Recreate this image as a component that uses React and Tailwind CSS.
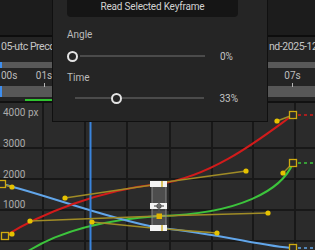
export default function App() {
  const vLines = [43, 85, 127, 170, 212, 253, 295];
  const hLines = [148, 179, 210, 241];
  const dots = [
    [277, 121], [283, 173], [246, 171], [268, 213], [217, 233],
    [65, 198], [30, 221], [12, 187], [12, 234], [92, 222],
  ];
  const handles = [
    [277, 121, 293, 115],
    [283, 173, 293, 163],
    [166, 182, 246, 171],
    [65, 198, 152, 185],
    [30, 221, 159, 216],
    [159, 216, 268, 213],
    [92, 222, 152, 228],
    [166, 229, 217, 233],
    [2, 184, 12, 187],
    [5, 236, 12, 234],
  ];
  return (
    <div className="relative w-[315px] h-[250px] overflow-hidden bg-[#1c1c1c] font-['Roboto',sans-serif] text-[10px]">
      <div className="h-[35px] bg-[#1c1c1c]" />
      <div className="h-[2px] bg-[#0d0d0d]" />
      <div className="bg-[#242424]">
        <div className="h-[25px] flex items-start text-[#c6c6c6] text-[10.5px] leading-[20px] tracking-[-0.45px]">
          <div className="w-[269px] shrink-0 pl-[1px] whitespace-nowrap overflow-hidden">05-utc Precomp 1</div>
          <div className="whitespace-nowrap overflow-hidden">nd-2025-12-05</div>
        </div>
        <div className="h-[6px] flex bg-[#595959]">
          <div className="w-[2px] bg-[#3d8ef0]" />
        </div>
        <div className="h-[18px] flex items-start text-[#bdbdbd] leading-[14px] pt-[1px]">
          <div className="w-[30px] pl-[1px] flex flex-col items-start">
            <span>00s</span>
          </div>
          <div className="w-[28px] flex flex-col items-center">
            <span>01s</span>
            <div className="w-[1px] h-[4px] bg-[#b5b5b5]" />
          </div>
          <div className="flex-1" />
          <div className="w-[27px] mr-[9px] flex flex-col items-center">
            <span>07s</span>
            <div className="w-[1px] h-[4px] bg-[#b5b5b5]" />
          </div>
        </div>
        <div className="h-[11px] flex bg-[#575757]">
          <div className="w-[2px] bg-[#3d8ef0]" />
        </div>
        <div className="h-[2px]" />
        <div className="h-[2px] flex">
          <div className="ml-[25px] w-[110px] bg-[#2fc42f]" />
        </div>
      </div>
      <div className="h-[2px] bg-[#111111]" />
      <svg width="315" height="147" viewBox="0 103 315 147" className="block bg-[#2b2b2b]">
        {vLines.map((x) => (
          <line key={"v" + x} x1={x} y1="103" x2={x} y2="250" stroke="#181818" strokeWidth="2" />
        ))}
        {hLines.map((y) => (
          <line key={"h" + y} x1="0" y1={y} x2="315" y2={y} stroke="#181818" strokeWidth="2" />
        ))}
        <g fill="#ababab" fontSize="10" fontFamily="Roboto, sans-serif">
          <text x="3" y="116">4000 px</text>
          <text x="3" y="147">3000</text>
          <text x="3" y="177.5">2000</text>
          <text x="3" y="208">1000</text>
        </g>
        <g fill="none" strokeWidth="2" strokeLinecap="round">
          <path d="M18 258 C50 234 100 220 159 216 C240 214 282 190 293 163" stroke="#3cc43c" />
          <path d="M2 184 C50 196 105 218 159 228 C217 233 265 247 293 248" stroke="#62a6ea" />
          <path d="M5 236 C40 214 100 190 159 184 C215 176 265 135 293 115" stroke="#d21b1b" />
        </g>
        <g strokeWidth="1.6" strokeDasharray="3 3">
          <line x1="298" y1="115" x2="315" y2="115" stroke="#d21b1b" />
          <line x1="298" y1="163" x2="315" y2="163" stroke="#3cc43c" />
          <line x1="298" y1="248" x2="315" y2="248" stroke="#62a6ea" />
        </g>
        <line x1="90.5" y1="103" x2="90.5" y2="250" stroke="#3a84dc" strokeWidth="2" />
        <g stroke="#a08c26" strokeWidth="1.5">
          {handles.map((h, i) => (
            <line key={"l" + i} x1={h[0]} y1={h[1]} x2={h[2]} y2={h[3]} />
          ))}
        </g>
        <g fill="#e6c200">
          {dots.map((d, i) => (
            <circle key={"d" + i} cx={d[0]} cy={d[1]} r="2.6" />
          ))}
        </g>
        <g fill="#2b2b2b" stroke="#cfaa10" strokeWidth="1.3">
          <rect x="289.5" y="111.5" width="7" height="7" />
          <rect x="289.5" y="159.5" width="7" height="7" />
          <rect x="289.5" y="244.5" width="7" height="7" />
          <rect x="-1.5" y="180.5" width="7" height="7" />
          <rect x="1.5" y="232.5" width="7" height="7" />
        </g>
        <rect x="152" y="183" width="14" height="47" fill="rgba(200,200,200,0.22)" stroke="#8a8a8a" strokeWidth="1" />
        <g fill="#f4f4f4">
          <rect x="150" y="181" width="17" height="6" />
          <rect x="150" y="203" width="17" height="6" />
          <rect x="150" y="225" width="17" height="6" />
        </g>
        <g stroke="#c8a400" strokeWidth="1.2">
          <line x1="162" y1="181" x2="162" y2="187" />
          <line x1="162" y1="225" x2="162" y2="231" />
        </g>
        <rect x="156.5" y="213.5" width="5.5" height="5.5" fill="#e0b400" />
        <g stroke="#555" strokeWidth="1.2" fill="none">
          <circle cx="159" cy="206" r="2" />
          <line x1="159" y1="201" x2="159" y2="211" />
          <line x1="154" y1="206" x2="164" y2="206" />
        </g>
      </svg>

      <div className="absolute left-[52px] top-[-14px] w-[216px] h-[136px] bg-[#252525] border border-[#101010] pl-[14px] pr-[29px] pt-[9px] flex flex-col">
        <button className="h-[21px] w-full rounded-[4px] bg-[#151515] text-[#d2d2d2] text-[10px] leading-[21px] tracking-[-0.2px]">
          Read Selected Keyframe
        </button>
        <div className="mt-[11px] h-[14px] leading-[14px] text-[#bcbcbc] text-[10px]">Angle</div>
        <div className="mt-[5px] h-[18px] flex items-center">
          <div className="w-[11px] h-[11px] rounded-full border-2 border-[#e4e4e4] bg-[#252525] shrink-0" />
          <div className="ml-[2px] w-[125px] h-[2px] bg-[#4b4b4b]" />
          <div className="ml-[15px] text-[#c4c4c4] text-[10px]">0%</div>
        </div>
        <div className="mt-[6px] h-[14px] leading-[14px] text-[#bcbcbc] text-[10px]">Time</div>
        <div className="mt-[4px] h-[18px] flex items-center">
          <div className="ml-[8px] w-[36px] h-[2px] bg-[#4b4b4b]" />
          <div className="w-[11px] h-[11px] rounded-full border-2 border-[#e4e4e4] bg-[#252525] shrink-0" />
          <div className="w-[83px] h-[2px] bg-[#4b4b4b]" />
          <div className="ml-[15px] text-[#c4c4c4] text-[10px]">33%</div>
        </div>
      </div>
    </div>
  );
}
